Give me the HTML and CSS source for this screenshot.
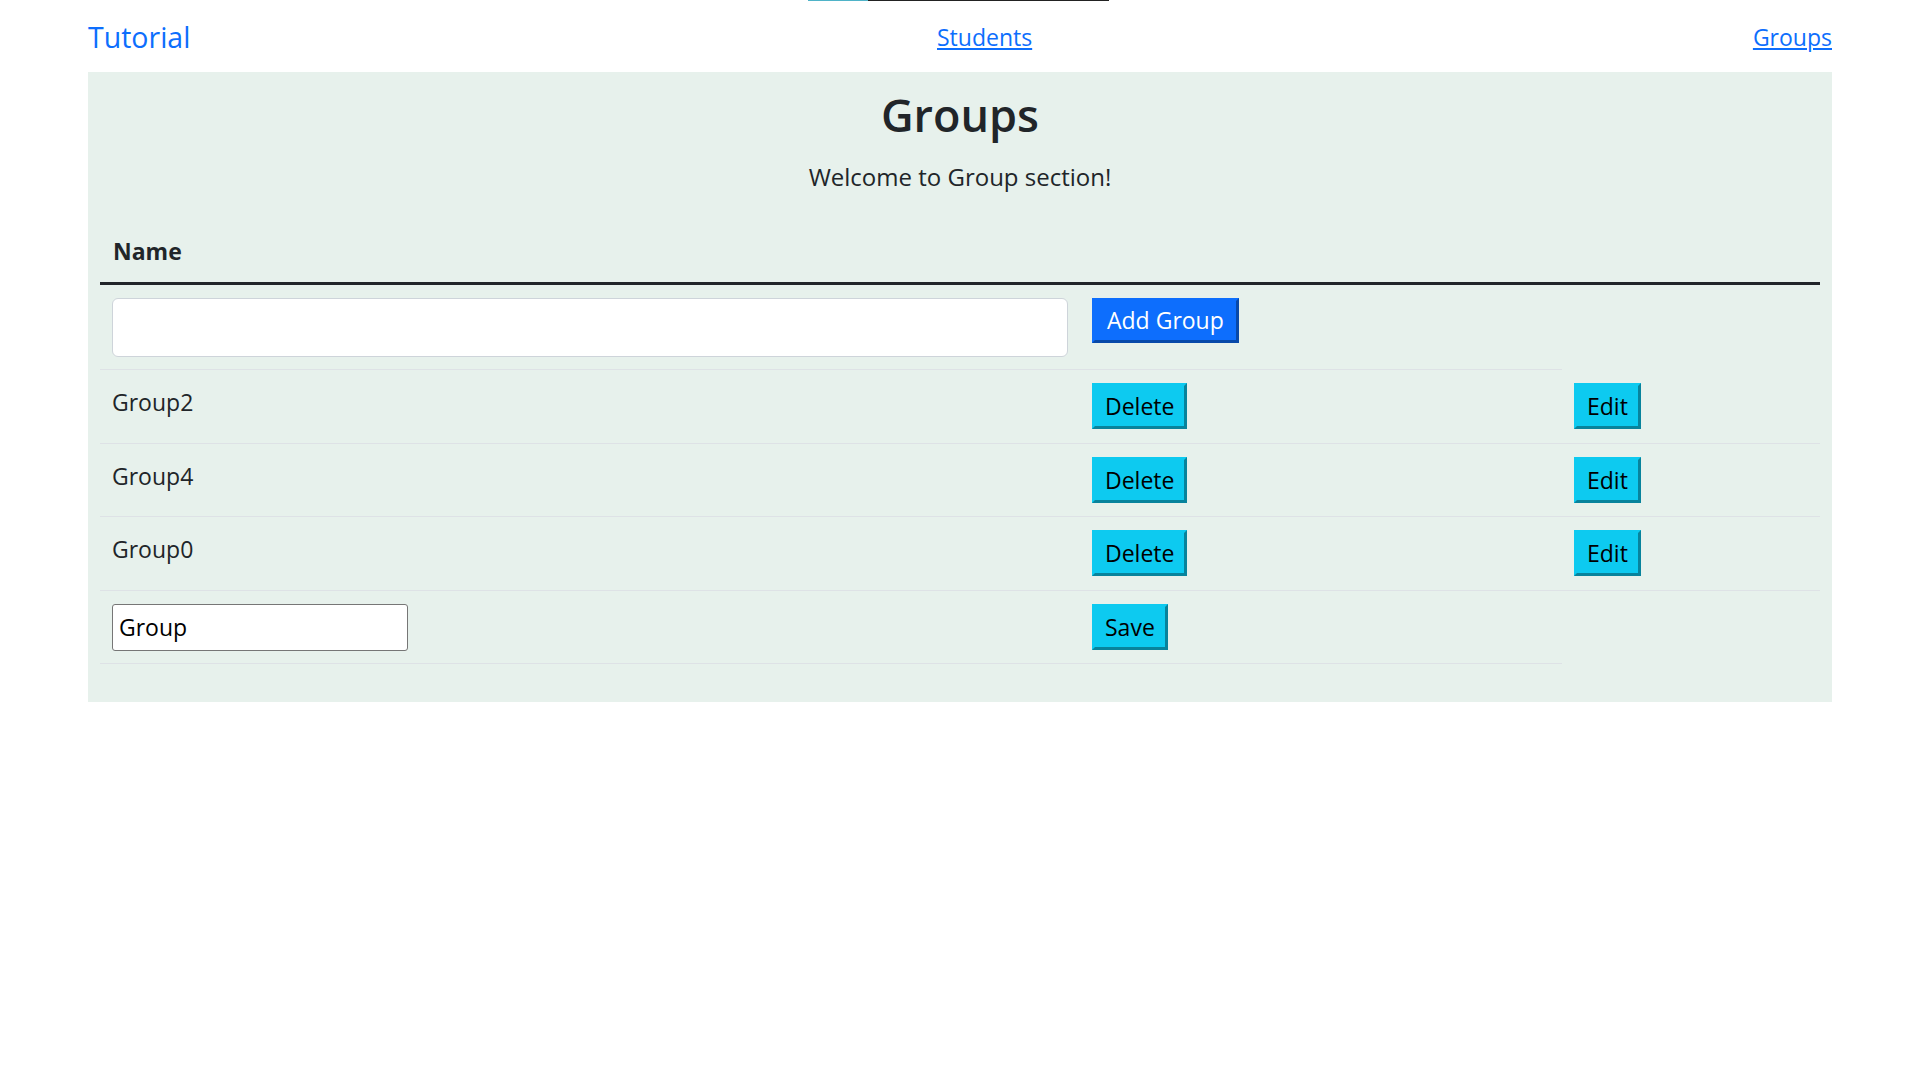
FILE: index.html
```html
<!DOCTYPE html>
<html lang="en">
<head>
<meta charset="utf-8">
<title>Groups</title>
<link rel="stylesheet" href="styles.css">
</head>
<body>
<div class="loadbar"><span class="loadbar-fill"></span></div>
<div class="page">
  <nav class="topnav">
    <a class="brand" href="#">Tutorial</a>
    <a class="navlink" href="#">Students</a>
    <a class="navlink" href="#">Groups</a>
  </nav>
  <main class="panel">
    <h1 class="title">Groups</h1>
    <p class="lead">Welcome to Group section!</p>
    <table class="grid">
      <colgroup><col class="c1"><col class="c2"><col class="c3"></colgroup>
      <thead>
        <tr><th>Name</th><th></th><th></th></tr>
      </thead>
      <tbody>
        <tr class="add-row">
          <td><input class="name-input" type="text"></td>
          <td><button class="btn btn-blue" type="button">Add Group</button></td>
        </tr>
        <tr>
          <td class="name">Group2</td>
          <td><button class="btn btn-cyan" type="button">Delete</button></td>
          <td><button class="btn btn-cyan" type="button">Edit</button></td>
        </tr>
        <tr>
          <td class="name">Group4</td>
          <td><button class="btn btn-cyan" type="button">Delete</button></td>
          <td><button class="btn btn-cyan" type="button">Edit</button></td>
        </tr>
        <tr>
          <td class="name">Group0</td>
          <td><button class="btn btn-cyan" type="button">Delete</button></td>
          <td><button class="btn btn-cyan" type="button">Edit</button></td>
        </tr>
        <tr class="edit-row">
          <td><input class="edit-input" type="text" value="Group"></td>
          <td><button class="btn btn-cyan" type="button">Save</button></td>
        </tr>
      </tbody>
    </table>
  </main>
</div>
</body>
</html>
```

FILE: styles.css
```css
* { box-sizing: border-box; }
html, body { margin: 0; background: #fff; }
body {
  font-family: "Open Sans", "Noto Sans", sans-serif;
  color: #212529;
}

.loadbar {
  position: absolute;
  top: 0;
  left: 808px;
  width: 301px;
  height: 1px;
  background: #222;
  display: flex;
}
.loadbar-fill { width: 60px; background: #4fb3c8; }

.page { padding: 0 88px; }

.topnav {
  display: grid;
  grid-template-columns: 849px 1fr auto;
  align-items: center;
  height: 72px;
  padding-top: 3px;
}
.brand {
  font-size: 28.5px;
  line-height: 1.5;
  color: #0d6efd;
  text-decoration: none;
}
.navlink {
  font-size: 23px;
  line-height: 1.5;
  color: #0d6efd;
  text-decoration: underline;
}

.panel {
  background: #e7f1ec;
  height: 630px;
  padding: 16px 12px 0;
}
.title {
  margin: 0 0 17px;
  text-align: center;
  font-size: 45px;
  font-weight: 600;
  line-height: 54px;
}
.lead {
  margin: 0 0 28.5px;
  text-align: center;
  font-size: 24px;
  line-height: 36px;
}

.grid {
  width: 1720px;
  border-collapse: collapse;
  table-layout: fixed;
}
.c1 { width: 980px; }
.c2 { width: 482px; }

.grid th {
  text-align: left;
  font-size: 23px;
  font-weight: 700;
  line-height: 34.5px;
  padding: 10.5px 12px 13.5px 13px;
  border-bottom: 3px solid #212529;
}
.grid td {
  padding: 13px 12px 13.5px;
  border-bottom: 1px solid #dee2e6;
  vertical-align: top;
  font-size: 23px;
  line-height: 38px;
}
.grid .add-row td { padding: 12.5px 12px 12.7px; }
.grid .edit-row td { padding: 13px 12px 12.5px; }

.name-input {
  display: block;
  width: 100%;
  height: 59px;
  border: 1px solid #ced4da;
  border-radius: 6px;
  background: #fff;
}
.edit-input {
  display: block;
  width: 296px;
  height: 47px;
  padding: 0 6px;
  border: 1px solid #767676;
  border-radius: 3px;
  background: #fff;
  font-family: "Open Sans", "Noto Sans", sans-serif;
  font-size: 23px;
  color: #000;
}

.btn {
  display: block;
  width: fit-content;
  height: 46px;
  padding: 0 10px;
  font-family: "Open Sans", "Noto Sans", sans-serif;
  font-size: 23px;
  line-height: 38px;
  border: 3px outset;
  cursor: pointer;
}
.btn-blue {
  height: 45px;
  padding: 0 12px;
  background: #0d6efd;
  border-color: #0d6efd;
  color: #fff;
}
.btn-cyan {
  background: #0dcaf0;
  border-color: #0dcaf0;
  color: #000;
}
```
